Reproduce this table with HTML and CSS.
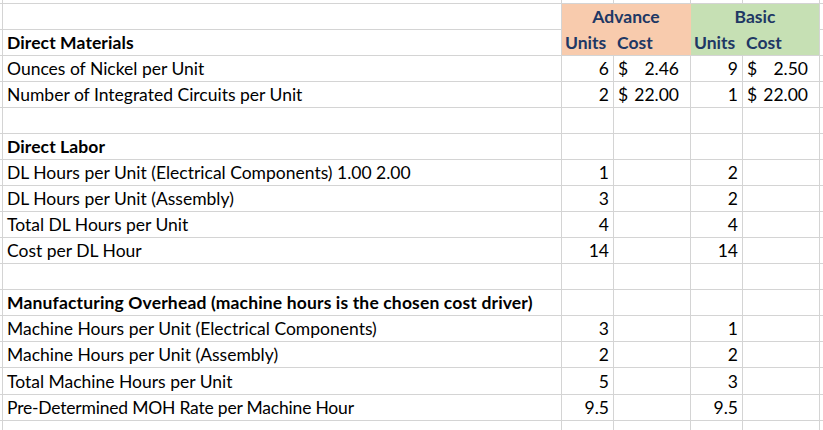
FILE: index.html
```html
<!DOCTYPE html>
<html lang="en">
<head>
<meta charset="utf-8">
<title>Cost Sheet</title>
<link rel="stylesheet" href="styles.css">
</head>
<body>
<div class="sheet">
  <div class="row"><div class="cell"></div><div class="cell"></div><div class="cell"></div><div class="cell"></div><div class="cell"></div><div class="cell"></div><div class="cell"></div></div>

  <div class="row"><div class="cell"></div><div class="cell"></div><div class="cell t band adv">Advance</div><div class="cell t band bas">Basic</div><div class="cell"></div></div>

  <div class="row"><div class="cell"></div><div class="cell t b">Direct Materials</div><div class="cell t hd adv-u">Units</div><div class="cell t hd adv-c">Cost</div><div class="cell t hd bas-u">Units</div><div class="cell t hd bas-c">Cost</div><div class="cell"></div></div>

  <div class="row"><div class="cell"></div><div class="cell t">Ounces of Nickel per Unit</div><div class="cell t num">6</div><div class="cell t cur"><span>$</span><span>2.46</span></div><div class="cell t num">9</div><div class="cell t cur"><span>$</span><span>2.50</span></div><div class="cell"></div></div>

  <div class="row"><div class="cell"></div><div class="cell t">Number of Integrated Circuits per Unit</div><div class="cell t num">2</div><div class="cell t cur"><span>$</span><span>22.00</span></div><div class="cell t num">1</div><div class="cell t cur"><span>$</span><span>22.00</span></div><div class="cell"></div></div>

  <div class="row"><div class="cell"></div><div class="cell"></div><div class="cell"></div><div class="cell"></div><div class="cell"></div><div class="cell"></div><div class="cell"></div></div>

  <div class="row"><div class="cell"></div><div class="cell t b">Direct Labor</div><div class="cell"></div><div class="cell"></div><div class="cell"></div><div class="cell"></div><div class="cell"></div></div>

  <div class="row"><div class="cell"></div><div class="cell t">DL Hours per Unit (Electrical Components) 1.00 2.00</div><div class="cell t num">1</div><div class="cell"></div><div class="cell t num">2</div><div class="cell"></div><div class="cell"></div></div>

  <div class="row"><div class="cell"></div><div class="cell t">DL Hours per Unit (Assembly)</div><div class="cell t num">3</div><div class="cell"></div><div class="cell t num">2</div><div class="cell"></div><div class="cell"></div></div>

  <div class="row"><div class="cell"></div><div class="cell t">Total DL Hours per Unit</div><div class="cell t num">4</div><div class="cell"></div><div class="cell t num">4</div><div class="cell"></div><div class="cell"></div></div>

  <div class="row"><div class="cell"></div><div class="cell t">Cost per DL Hour</div><div class="cell t num">14</div><div class="cell"></div><div class="cell t num">14</div><div class="cell"></div><div class="cell"></div></div>

  <div class="row"><div class="cell"></div><div class="cell"></div><div class="cell"></div><div class="cell"></div><div class="cell"></div><div class="cell"></div><div class="cell"></div></div>

  <div class="row"><div class="cell"></div><div class="cell t b long">Manufacturing Overhead (machine hours is the chosen cost driver)</div><div class="cell"></div><div class="cell"></div><div class="cell"></div><div class="cell"></div><div class="cell"></div></div>

  <div class="row"><div class="cell"></div><div class="cell t">Machine Hours per Unit (Electrical Components)</div><div class="cell t num">3</div><div class="cell"></div><div class="cell t num">1</div><div class="cell"></div><div class="cell"></div></div>

  <div class="row"><div class="cell"></div><div class="cell t">Machine Hours per Unit (Assembly)</div><div class="cell t num">2</div><div class="cell"></div><div class="cell t num">2</div><div class="cell"></div><div class="cell"></div></div>

  <div class="row"><div class="cell"></div><div class="cell t">Total Machine Hours per Unit</div><div class="cell t num">5</div><div class="cell"></div><div class="cell t num">3</div><div class="cell"></div><div class="cell"></div></div>

  <div class="row"><div class="cell"></div><div class="cell t tight">Pre-Determined MOH Rate per Machine Hour</div><div class="cell t num">9.5</div><div class="cell"></div><div class="cell t num">9.5</div><div class="cell"></div><div class="cell"></div></div>

  <div class="row"><div class="cell"></div><div class="cell"></div><div class="cell"></div><div class="cell"></div><div class="cell"></div><div class="cell"></div><div class="cell"></div></div>
</div>
</body>
</html>
```

FILE: styles.css
```css
html, body {
  margin: 0;
  padding: 0;
  background: #ffffff;
}

body {
  width: 823px;
  height: 430px;
  overflow: hidden;
  font-family: Lato, "Liberation Sans", sans-serif;
  color: #000000;
}

.sheet {
  display: grid;
  grid-template-columns: 2px 558px 51px 76px 51px 76px 1fr;
  grid-template-rows: 3px repeat(14, 25px) 26px 25px 1fr;
  gap: 1px;
  width: 823px;
  height: 430px;
  background: #d4d4d4;
}

.row {
  display: contents;
}

.cell {
  background: #ffffff;
  min-width: 0;
  min-height: 0;
  overflow: hidden;
}

.t {
  display: flex;
  align-items: flex-end;
  padding: 0 4px 2px 4px;
  font-size: 17.5px;
  line-height: 20px;
  white-space: nowrap;
}

.b {
  font-weight: bold;
  letter-spacing: 0.1px;
}

.long {
  letter-spacing: 0.15px;
}

.tight {
  letter-spacing: -0.2px;
}

.num {
  justify-content: flex-end;
  padding-right: 4px;
}

.cur {
  justify-content: space-between;
  padding-left: 4px;
  padding-right: 11px;
}

.band {
  grid-column: span 2;
  justify-content: center;
  font-weight: bold;
  color: #203764;
}

.hd {
  font-weight: bold;
  color: #203764;
  padding-left: 3px;
}

.adv {
  background: #f8cbad;
  box-shadow: 0 1px 0 #f8cbad, 1px 1px 0 #f8cbad, 1px 0 0 #f8cbad;
}

.bas {
  background: #c6e0b4;
  box-shadow: 0 1px 0 #c6e0b4;
}

.adv-u,
.adv-c {
  background: #f8cbad;
  box-shadow: 1px 0 0 #f8cbad;
}

.bas-u {
  background: #c6e0b4;
  box-shadow: 1px 0 0 #c6e0b4;
}

.bas-c {
  background: #c6e0b4;
}
```
